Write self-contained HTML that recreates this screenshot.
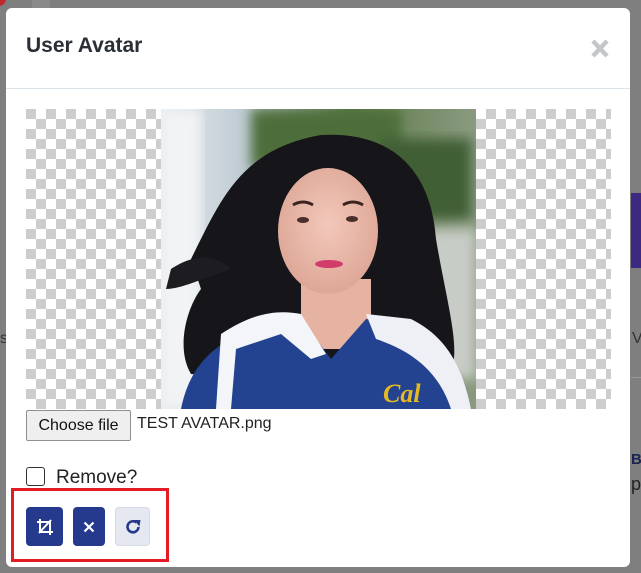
<!DOCTYPE html>
<html><head><meta charset="utf-8"><style>
html,body{margin:0;padding:0;width:641px;height:573px;overflow:hidden;background:#7f7f7f;font-family:"Liberation Sans",Arial,sans-serif;position:relative}
.abs{position:absolute}
.modal{left:6px;top:8px;width:624px;height:559px;background:#fff;border-radius:6px}
.title{left:26px;top:34px;font-size:21px;color:#2a2e35;font-weight:bold;letter-spacing:0}
.hline{left:6px;top:88px;width:624px;height:1px;background:#dbe5ea}
.checker{left:26px;top:109px;width:585px;height:300px;
background-color:#fff;
background-image:linear-gradient(45deg,#cdcdcd 25%,transparent 25%,transparent 75%,#cdcdcd 75%),linear-gradient(45deg,#cdcdcd 25%,transparent 25%,transparent 75%,#cdcdcd 75%);
background-size:20px 20px;background-position:10px 0,0 10px}
.btn{width:37px;height:39px;border-radius:4px;background:#253a8c;display:flex;align-items:center;justify-content:center}
</style></head><body>
<div class="abs" style="left:-8px;top:-8px;width:14px;height:14px;border-radius:50%;background:#c0282c"></div>
<div class="abs" style="left:32px;top:0;width:18px;height:8px;background:#8a8a8a"></div>
<div class="abs" style="left:631px;top:193px;width:10px;height:75px;background:#3d2a80"></div>
<div class="abs" style="left:632px;top:330px;font-size:16px;color:#333">V</div>
<div class="abs" style="left:631px;top:377px;width:10px;height:1px;background:#999"></div>
<div class="abs" style="left:631px;top:451px;font-size:15px;font-weight:bold;color:#1b2350">B</div>
<div class="abs" style="left:631px;top:474px;font-size:18px;color:#222">p</div>
<div class="abs" style="left:0;top:330px;font-size:16px;color:#333">s</div>
<div class="abs modal"></div>
<div class="abs title">User Avatar</div>
<svg class="abs" style="left:590px;top:39px" width="20" height="19" viewBox="0 0 20 19"><path d="M3 2L17 17M17 2L3 17" stroke="#c3c6ca" stroke-width="4.5"/></svg>
<div class="abs hline"></div>
<div class="abs checker"></div>
<svg class="abs" style="left:161px;top:109px" width="315" height="300" viewBox="0 0 315 300">
<defs>
<linearGradient id="bg" x1="0" x2="1"><stop offset="0" stop-color="#e8ecef"/><stop offset=".3" stop-color="#b9c6cf"/><stop offset=".6" stop-color="#5d7a48"/><stop offset="1" stop-color="#8a9a80"/></linearGradient>
<radialGradient id="sk" cx=".5" cy=".45" r=".6"><stop offset="0" stop-color="#f2c8bb"/><stop offset="1" stop-color="#dca493"/></radialGradient>
<filter id="bl"><feGaussianBlur stdDeviation="6"/></filter>
</defs>
<rect width="315" height="300" fill="url(#bg)"/>
<rect x="0" y="0" width="40" height="300" fill="#f1f3f4" filter="url(#bl)"/>
<rect x="90" y="0" width="150" height="60" fill="#4d6e3a" filter="url(#bl)"/>
<rect x="220" y="30" width="90" height="80" fill="#3f5e35" filter="url(#bl)"/>
<rect x="260" y="120" width="55" height="150" fill="#c7ccc6" filter="url(#bl)"/>
<path d="M30 150 C60 90 80 40 160 26 C230 22 270 60 275 130 C285 190 300 240 290 260 L230 270 L90 270 L30 265 C15 240 25 200 40 180 Z" fill="#16151a"/>
<path d="M10 160 C40 140 60 150 70 160 C40 170 20 180 5 180Z" fill="#1d1c20"/>
<rect x="140" y="170" width="70" height="70" fill="#e6b3a2"/>
<ellipse cx="167" cy="122" rx="50" ry="63" fill="url(#sk)"/>
<path d="M132 96 q10-6 20 0 M182 96 q10-6 20 0" stroke="#3a2420" stroke-width="3" fill="none"/>
<ellipse cx="142" cy="111" rx="6" ry="3" fill="#4a2e28"/>
<ellipse cx="191" cy="110" rx="6" ry="3" fill="#4a2e28"/>
<ellipse cx="168" cy="155" rx="14" ry="4" fill="#d13c6a"/>
<path d="M20 300 C30 250 60 230 105 215 L140 210 L170 250 L205 210 L240 215 C280 235 300 250 310 300Z" fill="#23428f"/>
<path d="M60 225 C90 205 115 200 140 205 L165 245 L150 250 L120 225 L75 240 L70 300 L55 300Z" fill="#f4f5f8"/>
<path d="M205 205 L250 210 C280 225 300 250 310 300 L290 300 C280 270 260 245 215 230Z" fill="#eef0f5"/>
<text x="222" y="293" font-family="Liberation Serif,serif" font-style="italic" font-weight="bold" font-size="26" fill="#e5b824">Cal</text>
</svg>
<div class="abs" style="left:26px;top:410px;width:103px;height:29px;border:1px solid #8f8f8f;border-radius:2px;background:#efefef;font-size:16px;line-height:29px;text-align:center;color:#111">Choose file</div>
<div class="abs" style="left:137px;top:415px;font-size:16px;color:#222">TEST AVATAR.png</div>
<div class="abs" style="left:26px;top:467px;width:17px;height:17px;border:1.5px solid #333;border-radius:3px;background:#fff"></div>
<div class="abs" style="left:56px;top:467px;font-size:19px;color:#222">Remove?</div>
<div class="abs" style="left:11px;top:488px;width:152px;height:68px;border:3px solid #e41b23"></div>
<div class="abs btn" style="left:26px;top:507px"><svg width="18" height="18" viewBox="0 0 18 18"><path d="M4 1V14H17M1 4H14V17M15 2L3 15" stroke="#fff" stroke-width="2" fill="none"/></svg></div>
<div class="abs btn" style="left:73px;top:507px;width:32px"><svg width="12" height="12" viewBox="0 0 12 12"><path d="M1.5 1.5L10.5 10.5M10.5 1.5L1.5 10.5" stroke="#fff" stroke-width="2.2"/></svg></div>
<div class="abs btn" style="left:115px;top:507px;width:35px;background:#e5e8f1;border:1px solid #d6dae6;box-sizing:border-box"><svg width="18" height="18" viewBox="0 0 18 18"><path d="M14.5 9A5.5 5.5 0 1 1 12.5 4.5" stroke="#253a8c" stroke-width="2.6" fill="none"/><path d="M10 2L16.5 2L15.5 8.5Z" fill="#253a8c"/></svg></div>
</body></html>
